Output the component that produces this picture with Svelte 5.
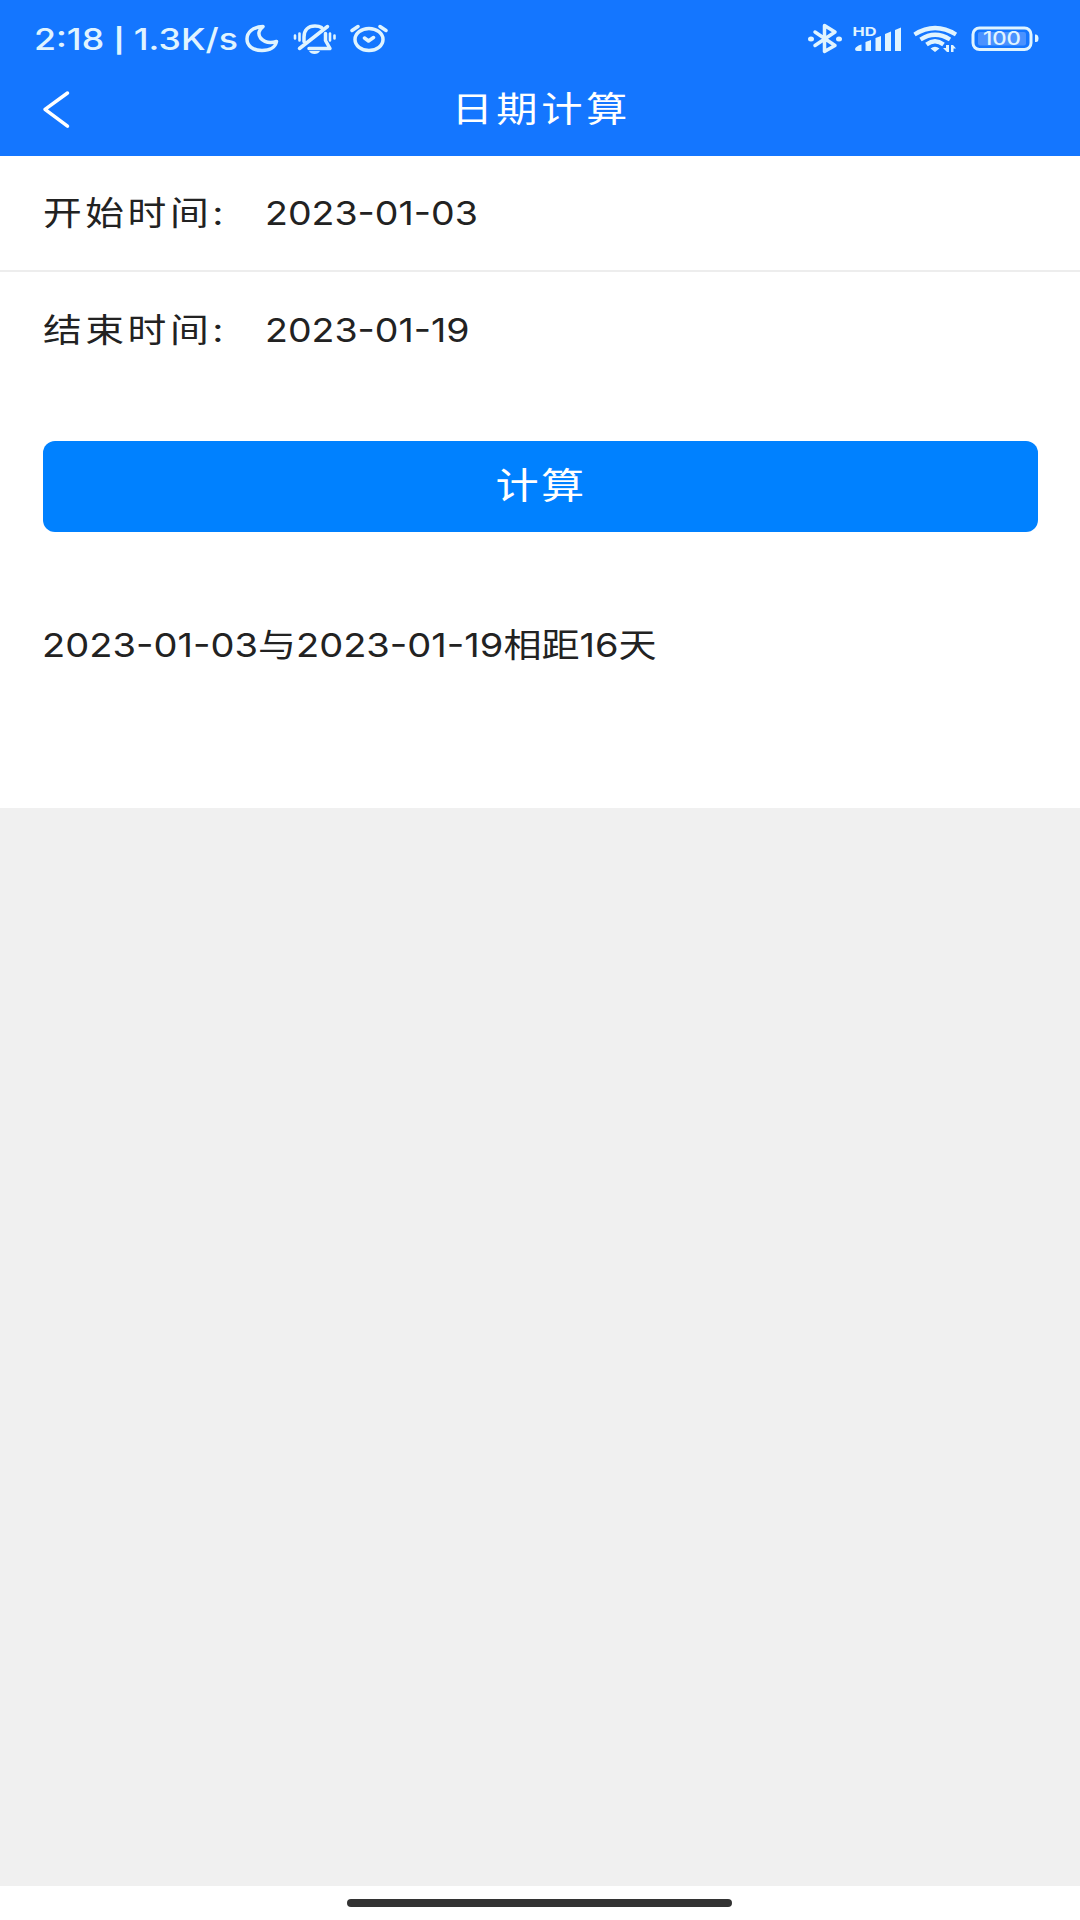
<script>
  let startDate = '2023-01-03';
  let endDate = '2023-01-19';
  let result = '2023-01-03与2023-01-19相距16天';

  function calculate() {
    const days = Math.abs(new Date(endDate) - new Date(startDate)) / 86400000;
    result = `${startDate}与${endDate}相距${days}天`;
  }
</script>

<div class="page">
  <header>
    <div class="status">
      <div class="clock"><span class="wide">2:18 <span class="sep">|</span> 1.3K/s</span></div>
      <svg class="moon" width="36" height="32" viewBox="244 23 36 32">
        <path class="line" d="M263 26.500C252.500 27 247 32.500 247 39C247 46 253 50.500 262 50.500C270 50.500 275.500 47 276.500 41.500C270 43.500 264 42 260.500 38C257.500 34 259 29.500 263 26.500Z" />
      </svg>
      <svg class="bell" width="44" height="32" viewBox="293 23 44 32">
        <path class="line" d="M299.500 48.500L327.500 26.500M304 41.500V37C304 30 308 26 315 26C318 26 320 26.500 321.500 27.500M325.500 33.500V40.500L330 48.500H309" />
        <path class="line thin" d="M295 35.500V38.500M299.500 33.500V40.500M330 33.500V40.500M334.500 35.500V38.500" />
        <path class="solid" d="M309 51H320C319 53 317 54 314.500 54S310 53 309 51Z" />
      </svg>
      <svg class="alarm" width="38" height="32" viewBox="350 23 38 32">
        <ellipse class="line" cx="369" cy="39.500" rx="14" ry="11" />
        <path class="line" d="M352 30.500L358 26.500M380 26.500L386 30.500M364.500 38L368.500 41L373.500 37.500" />
      </svg>

      <svg class="bluetooth" width="36" height="32" viewBox="807 23 36 32">
        <path class="line" d="M815 32L835 45.500L824.500 51.500V25.500L835 32L815 45.500" />
        <ellipse class="solid" cx="811" cy="39" rx="3" ry="2.500" />
        <ellipse class="solid" cx="839" cy="39" rx="3" ry="2.500" />
      </svg>
      <svg class="signal" width="50" height="32" viewBox="852 23 50 32">
        <text x="852.500" y="35.500" textLength="24" lengthAdjust="spacingAndGlyphs">HD</text>
        <path class="solid" d="M855 49Q856 46 861.500 44.500V51H857Q855 51 855 49ZM865.500 42L871 40V51H865.500ZM875.500 38L881 36V51H875.500ZM885 34L891 31.500V51H885ZM895 30L901 27.500V51H895Z" />
      </svg>
      <svg class="wifi" width="46" height="32" viewBox="912 23 46 32">
        <path class="arc" d="M914.500 34.500Q935 21.500 956 34.500M920.500 39.500Q935 30 950 39.500M926.500 44.500Q935 38 943.500 44.500" />
        <path class="solid" d="M930.500 48.500Q935 45 939.500 48.500L935 52ZM943 48H946V45H949V52H947ZM951 45H953L956 48.500H953.500V52H951Z" />
      </svg>
      <svg class="battery" width="70" height="32" viewBox="971 23 70 32">
        <rect class="charge" x="978" y="32" width="48" height="13.500" rx="2" />
        <rect class="line" x="973" y="28" width="58" height="21.500" rx="6.500" />
        <path class="solid" d="M1035 34.500H1036Q1038.500 35 1038.500 38.500T1036 42H1035Z" />
        <text class="level" x="983" y="45.200" textLength="38" lengthAdjust="spacingAndGlyphs">100</text>
      </svg>
    </div>
    <div class="nav">
      <svg width="30" height="42" viewBox="42 88 30 42">
        <path d="M67.500 93L45 109.300L67.500 126.200" />
      </svg>
      <h1>日期计算</h1>
    </div>
  </header>

  <main>
    <div class="row">
      <div class="label">开始时间:</div>
      <div class="value"><span class="wide">{startDate}</span></div>
    </div>
    <div class="row">
      <div class="label">结束时间:</div>
      <div class="value"><span class="wide">{endDate}</span></div>
    </div>
    <button on:click={calculate}><span class="caption">计算</span></button>
    <p><span class="wide">{result}</span></p>
  </main>

  <footer><div class="home"></div></footer>
</div>

<style>
  :global(body) {
    background: #f0f0f0;
  }

  .page {
    display: flex;
    flex-direction: column;
    height: 1920px;
    font-family: Inter, "Noto Sans CJK SC", sans-serif;
    color: #222;
  }

  .wide {
    display: inline-block;
    white-space: pre;
    transform-origin: left center;
    transform: scaleX(1.137);
  }

  header {
    height: 155.5px;
    background: #1476ff;
    color: #fff;
  }

  .status {
    display: flex;
    align-items: center;
    box-sizing: border-box;
    height: 76px;
    padding: 2px 39px 0 34px;
  }

  .status svg {
    flex: none;
  }

  .clock {
    width: 210px;
    font-size: 30px;
    font-weight: 500;
    color: #e0f4ff;
  }

  .clock .wide {
    transform: scaleX(1.19);
  }

  .sep {
    font-size: 24px;
    font-weight: 700;
    vertical-align: 1px;
  }

  .bell { margin-left: 13px; }
  .alarm { margin-left: 13px; }
  .bluetooth { margin-left: auto; }
  .signal { margin-left: 9px; }
  .wifi { margin-left: 10px; }
  .battery { margin-left: 13px; }

  .line, .arc {
    fill: none;
    stroke: #e0f4ff;
    stroke-width: 3.5;
    stroke-linecap: round;
    stroke-linejoin: round;
  }

  .arc {
    stroke-width: 4.2;
    stroke-linecap: butt;
  }

  .line.thin {
    stroke-width: 2.6;
  }

  .battery .line {
    stroke-width: 3;
  }

  .solid {
    fill: #e0f4ff;
  }

  .charge {
    fill: #4a92ff;
  }

  .status text {
    font-size: 12px;
    font-weight: 700;
    fill: #e0f4ff;
  }

  .status text.level {
    font-size: 18px;
    font-weight: 500;
  }

  .nav {
    display: grid;
    grid-template-columns: 30px 1fr 30px;
    align-items: center;
    height: 66px;
    padding: 0 42px;
  }

  .nav path {
    fill: none;
    stroke: #fff;
    stroke-width: 3.5;
    stroke-linecap: round;
    stroke-linejoin: round;
  }

  h1 {
    margin: 0 0 6px;
    font-size: 35px;
    font-weight: 400;
    letter-spacing: 3px;
    text-align: center;
    text-indent: 2px;
    transform: scaleX(1.18);
  }

  main {
    height: 652px;
    background: #fff;
  }

  .row {
    display: flex;
    align-items: center;
    box-sizing: border-box;
    height: 115px;
    padding-left: 43px;
    font-size: 33px;
  }

  .row:first-child {
    height: 116.500px;
    border-bottom: 2px solid #ededed;
  }

  .label {
    width: 222px;
    padding-bottom: 4px;
    letter-spacing: 3px;
    white-space: nowrap;
    transform-origin: left center;
    transform: scaleX(1.175);
  }

  button {
    display: block;
    width: 995px;
    height: 91px;
    margin: 53.500px auto 0 43px;
    padding: 0 0 6px;
    border: 0;
    border-radius: 12px;
    background: #0081ff;
    color: #fff;
    font: inherit;
    font-size: 36px;
    letter-spacing: 2px;
    text-indent: 1px;
  }

  .caption {
    display: inline-block;
    transform: scaleX(1.2);
  }

  p {
    margin: 89px 0 0 42px;
    font-size: 33px;
    line-height: 48px;
  }

  p .wide {
    transform: scaleX(1.153);
  }

  footer {
    display: flex;
    justify-content: center;
    height: 34px;
    margin-top: auto;
    background: #fff;
  }

  .home {
    width: 385px;
    height: 8px;
    margin: 13px 1px 0 0;
    border-radius: 4px;
    background: #333;
  }
</style>
